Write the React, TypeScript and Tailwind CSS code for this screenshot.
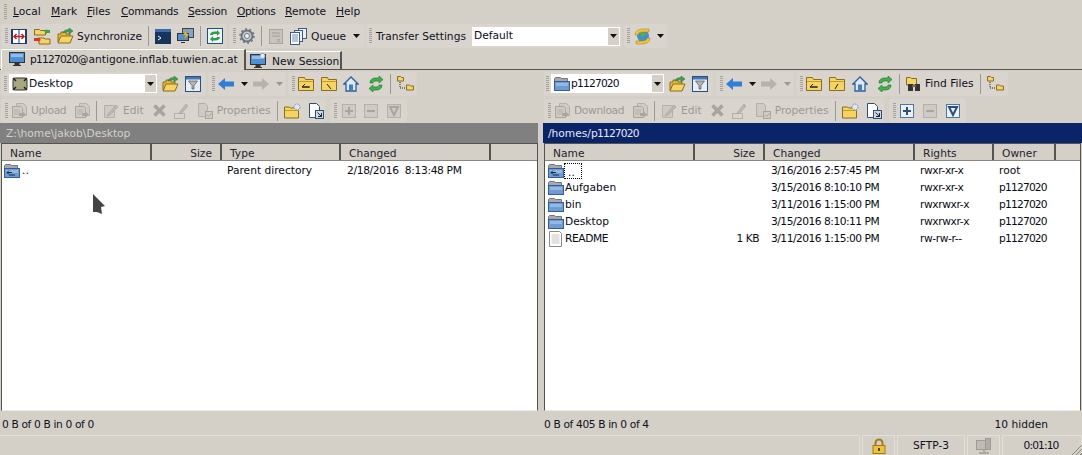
import React from "react";

const font = "font-['DejaVu_Sans',sans-serif]";

function Grip() {
  return (
    <div className="w-[3px] h-[16px] mx-[2px] shrink-0 bg-[repeating-linear-gradient(to_bottom,#a5a19a_0px,#a5a19a_1px,transparent_1px,transparent_2px)]" />
  );
}

function Sep() {
  return <div className="w-px h-[20px] mx-[6px] bg-[#9d9992] shrink-0" />;
}

function Caret({ gray }: { gray?: boolean }) {
  return (
    <svg width="7" height="4" className="shrink-0">
      <path d="M0 0h7L3.5 4z" fill={gray ? "#9b9890" : "#111"} />
    </svg>
  );
}

// the digits in the shot are narrower than DejaVu's, so squeeze them
function Id() {
  return <span className="tracking-[-0.8px]">p1127020</span>;
}

function FolderY({ glyph }: { glyph?: React.ReactNode }) {
  return (
    <svg width="16" height="16" viewBox="0 0 16 16" className="shrink-0">
      <path d="M.5 14.500V1.500h6l1 2h8v11z" fill="#f6d463" stroke="#8a6d1e" />
      <path d="M1 5.500h14" stroke="#c89b24" />
      {glyph}
    </svg>
  );
}

function FolderB({ up }: { up?: boolean }) {
  return (
    <svg width="16" height="16" viewBox="0 0 16 16" className="shrink-0">
      <path d="M.5 14.500V2.500l1-1h5l1 1h6v3" fill="#a8a8a8" stroke="#777" />
      <rect x=".5" y="5.500" width="15" height="9" fill="#6f9bd1" stroke="#2f5f9e" />
      <rect x="2" y="7" width="12" height="3" fill="#94b8e2" />
      {up && <path d="M3 9.500h5M5 7.500l-2 2 2 2M5 12h6" stroke="#0f2c54" fill="none" />}
    </svg>
  );
}

function Arrow({ left, gray }: { left?: boolean; gray?: boolean }) {
  const c = gray ? "#b6b3ac" : "#2f7fd8";
  return (
    <svg width="16" height="12" viewBox="0 0 16 12" className="shrink-0">
      <path d={left ? "M0 6l7-6v3.500h9v5H7V12z" : "M16 6L9 0v3.500H0v5h9V12z"} fill={c} />
    </svg>
  );
}

function FolderOpen() {
  return (
    <svg width="17" height="16" viewBox="0 0 17 16" className="shrink-0">
      <path d="M1 14V6h3V4h5v2h4v8z" fill="#e6b93a" stroke="#8a6d1e" />
      <path d="M1 15l3-7h12l-3 7z" fill="#f6d463" stroke="#8a6d1e" />
      <path d="M6 5c1-3 4-4 6-3V0l4 3-4 3V4c-2-.5-4 0-6 1z" fill="#39a64a" stroke="#1e6b2a" strokeWidth=".5" />
    </svg>
  );
}

function Filter() {
  return (
    <svg width="16" height="16" viewBox="0 0 16 16" className="shrink-0">
      <rect x=".5" y=".5" width="15" height="15" fill="#e8edf3" stroke="#27507f" />
      <rect x="1" y="1" width="14" height="2.500" fill="#3f78b8" />
      <path d="M3.500 5h9L9 9.500V13H7V9.500z" fill="#b5b5b5" stroke="#555" strokeWidth=".7" />
    </svg>
  );
}

function Home() {
  return (
    <svg width="16" height="16" viewBox="0 0 16 16" className="shrink-0">
      <path d="M8 1L1 8h2v7h10V8h2z" fill="#dfe8f2" stroke="#2c5f9b" strokeWidth="1.300" />
      <rect x="6" y="8.500" width="4" height="6.500" fill="#3f7fc4" />
    </svg>
  );
}

function Refresh() {
  return (
    <svg width="16" height="16" viewBox="0 0 16 16" className="shrink-0">
      <path d="M2 7c0-3 2-5 6-5h3V0l4 3.500L11 7V5H8C6 5 5 6 5 7z" fill="#3fb34a" stroke="#1b6e25" strokeWidth=".6" />
      <path d="M14 9c0 3-2 5-6 5H5v2l-4-3.500L5 9v2h3c2 0 3-1 3-2z" fill="#3fb34a" stroke="#1b6e25" strokeWidth=".6" />
    </svg>
  );
}

function Tree() {
  return (
    <svg width="17" height="17" viewBox="0 0 17 17" className="shrink-0">
      <path d="M.5 6V1.500h3l1 1h2V6z" fill="#f6d463" stroke="#8a6d1e" />
      <path d="M9.500 15v-5h3l1 1h3v4z" fill="#f6d463" stroke="#8a6d1e" />
      <path d="M3 7v6h5" stroke="#222" strokeDasharray="1 1" fill="none" />
    </svg>
  );
}

function DocStack() {
  return (
    <svg width="16" height="16" viewBox="0 0 16 16" className="shrink-0">
      <path d="M5.500.5h7l3 3v9h-10z" fill="#cfcbc4" stroke="#b4b1aa" />
      <path d="M1.500 3.500h8l2 2v9h-10z" fill="#cfcbc4" stroke="#a9a59e" />
      <path d="M3 7h6M3 9h6M3 11h6" stroke="#b4b1aa" />
      <path d="M8 10h3V8l4 3.500-4 3.500v-2H8z" fill="#aaa69f" />
    </svg>
  );
}

function FileDoc() {
  return (
    <svg width="16" height="16" viewBox="0 0 16 16" className="shrink-0">
      <path d="M1.500.5h10l2 2v13h-12z" fill="#fff" stroke="#8a8a8a" />
      <path d="M3.500 4h8M3.500 6h8M3.500 8h8M3.500 10h8M3.500 12h8" stroke="#c4c4c4" />
    </svg>
  );
}

function Pencil() {
  return (
    <svg width="16" height="16" viewBox="0 0 16 16" className="shrink-0">
      <path d="M1.500 2.500h10v12h-10z" fill="#cfcbc4" stroke="#b4b1aa" />
      <path d="M5 11l8-9 2 2-8 8-3 1z" fill="#bdb9b2" stroke="#aaa69f" strokeWidth=".7" />
    </svg>
  );
}

function Cross() {
  return (
    <svg width="15" height="15" viewBox="0 0 15 15" className="shrink-0">
      <path d="M2.500 2.500l10 10M12.500 2.500l-10 10" stroke="#a9a59e" strokeWidth="3.600" />
    </svg>
  );
}

function Rename() {
  return (
    <svg width="16" height="16" viewBox="0 0 16 16" className="shrink-0">
      <rect x=".5" y="10.500" width="10" height="5" fill="none" stroke="#b4b1aa" />
      <path d="M5 10l7-9 2 2-7 8z" fill="#bdb9b2" stroke="#aaa69f" strokeWidth=".7" />
    </svg>
  );
}

function Props() {
  return (
    <svg width="16" height="16" viewBox="0 0 16 16" className="shrink-0">
      <path d="M1.500.5h7l2 2v11h-9z" fill="#cfcbc4" stroke="#b4b1aa" />
      <rect x="8.500" y="8.500" width="7" height="7" fill="#cfcbc4" stroke="#a9a59e" />
      <path d="M10 12l1.500 1.500 3-3" stroke="#a9a59e" fill="none" />
    </svg>
  );
}

function NewFolder() {
  return (
    <svg width="17" height="16" viewBox="0 0 17 16" className="shrink-0">
      <path d="M.5 15V4h5l1 1h8v10z" fill="#f6d463" stroke="#8a6d1e" />
      <path d="M1 7.500h14" stroke="#c89b24" />
      <circle cx="13" cy="4" r="3" fill="#dfe6ee" stroke="#6b8db5" strokeDasharray="1.500 .8" />
    </svg>
  );
}

function ShortCut() {
  return (
    <svg width="16" height="16" viewBox="0 0 16 16" className="shrink-0">
      <path d="M1.500.5h7l3 3v11h-10z" fill="#fff" stroke="#2c5079" />
      <rect x="7.500" y="7.500" width="8" height="8" fill="#cfd8e2" stroke="#2c5079" />
      <path d="M9.500 9.500l4 4M13.500 10v3.500H10" stroke="#10243c" fill="none" />
    </svg>
  );
}

function BoxSign({ kind, gray }: { kind: "+" | "-" | "v"; gray?: boolean }) {
  const c = gray ? "#aaa69f" : "#27507f";
  return (
    <svg width="14" height="14" viewBox="0 0 14 14" className="shrink-0">
      <rect x=".5" y=".5" width="13" height="13" fill={gray ? "#cfcbc4" : "#eef1f4"} stroke={gray ? "#b4b1aa" : "#4a78ab"} />
      {kind === "+" && <path d="M3 7h8M7 3v8" stroke={c} strokeWidth="2" />}
      {kind === "-" && <path d="M3 7h8" stroke={c} strokeWidth="2" />}
      {kind === "v" && <path d="M3 3h8L7 11z" fill="none" stroke={c} strokeWidth="2" />}
    </svg>
  );
}

function Monitor({ star }: { star?: boolean }) {
  return (
    <svg width="16" height="16" viewBox="0 0 16 16" className="shrink-0">
      <rect x=".5" y="1.500" width="15" height="10" fill="#4f8fd6" stroke="#333" />
      <rect x="2" y="3" width="12" height="3" fill="#8fbdf0" />
      <path d="M6 12h4v2H6zM4 14.500h8" fill="#333" stroke="#333" />
      {star && <circle cx="12.500" cy="3" r="2.500" fill="#e6ebf1" stroke="#6b8db5" strokeDasharray="1.200 .7" />}
    </svg>
  );
}

function Group({ className, children }: { className: string; children: React.ReactNode }) {
  return <div className={`flex items-center rounded-[3px] bg-[#d9d5ce] shrink-0 ${className}`}>{children}</div>;
}

function Combo({ w, icon, label }: { w: string; icon: React.ReactNode; label: React.ReactNode }) {
  return (
    <div className={`flex items-center h-[19px] bg-white shrink-0 ${w}`}>
      <div className="ml-[2px] w-[17px] flex justify-center shrink-0">{icon}</div>
      <span className="ml-[1px] text-[#0b0b1e] flex-1">{label}</span>
      <div className="w-[11px] h-[17px] mr-px bg-[#d4d0c8] flex items-center justify-center">
        <Caret />
      </div>
    </div>
  );
}

function DriveIcon() {
  return (
    <svg width="16" height="16" viewBox="0 0 16 16">
      <rect x="1" y="2" width="14" height="12" rx="2" fill="#a9a77c" stroke="#333" />
      <path d="M1 2l3 3M15 2l-3 3M1 14l3-3M15 14l-3-3" stroke="#222" strokeWidth="1.500" />
    </svg>
  );
}

function Head({ w, right, children }: { w: string; right?: boolean; children?: React.ReactNode }) {
  return (
    <div
      className={`h-full shrink-0 flex items-center border-r-2 border-[#55534f] pt-[2px] ${w} ${right ? "justify-end pr-[8px]" : "pl-[8px]"}`}
    >
      {children}
    </div>
  );
}

function Row({ children }: { children: React.ReactNode }) {
  return <div className="flex items-center h-[17px] text-[#0a0a14]">{children}</div>;
}

function Cell({ w, right, children, tight }: { w: string; right?: boolean; children?: React.ReactNode; tight?: string }) {
  return <div className={`shrink-0 whitespace-nowrap ${w} ${tight ?? ""} ${right ? "text-right" : ""}`}>{children}</div>;
}

function NavGroups({ className }: { className: string }) {
  return (
    <Group className={`w-[78px] h-[24px] pl-[2px] ${className}`}>
      <Grip />
      <div className="ml-[1px]"><Arrow left /></div>
      <div className="ml-[7px]"><Caret /></div>
      <div className="ml-[5px]"><Arrow gray /></div>
      <div className="ml-[7px]"><Caret gray /></div>
    </Group>
  );
}

function FileButtons({ label, w }: { label: string; w: string }) {
  return (
    <>
      <Grip />
      <div className="ml-[1px]"><DocStack /></div>
      <span className={`ml-[4px] tracking-[-0.35px] ${w}`}>{label}</span>
      <div className="ml-[8px]"><DocStack /></div>
      <Sep />
      <Pencil />
      <span className="ml-[4px]">Edit</span>
      <div className="ml-[8px]"><Cross /></div>
      <div className="ml-[7px]"><Rename /></div>
      <div className="ml-[7px]"><Props /></div>
      <span className="ml-[4px]">Properties</span>
      <Sep />
      <NewFolder />
      <div className="ml-[7px]"><ShortCut /></div>
    </>
  );
}

const rightRows = [
  ["Aufgaben", "", "3/15/2016 8:10:10 PM", "rwxr-xr-x", "p1127020"],
  ["bin", "", "3/11/2016 1:15:00 PM", "rwxrwxr-x", "p1127020"],
  ["Desktop", "", "3/15/2016 8:10:11 PM", "rwxrwxr-x", "p1127020"],
  ["README", "1 KB", "3/11/2016 1:15:00 PM", "rw-rw-r--", "p1127020"],
];

export default function App() {
  return (
    <div className={`w-[1082px] h-[455px] overflow-hidden bg-[#d4d0c8] text-[10.67px] leading-[13px] text-[#101024] flex flex-col whitespace-nowrap ${font}`}>
      {/* menu */}
      <div className="h-[24px] flex items-center shrink-0 pl-[2px]">
        <Grip />
        <div className="flex ml-[4px] pb-[1px]">
          <span className="w-[38px]"><u>L</u>ocal</span>
          <span className="w-[36px]"><u>M</u>ark</span>
          <span className="w-[34px]"><u>F</u>iles</span>
          <span className="w-[67px] tracking-[-0.4px]"><u>C</u>ommands</span>
          <span className="w-[49px] tracking-[-0.25px]"><u>S</u>ession</span>
          <span className="w-[48px] tracking-[-0.4px]"><u>O</u>ptions</span>
          <span className="w-[51px]"><u>R</u>emote</span>
          <span><u>H</u>elp</span>
        </div>
      </div>

      {/* main toolbar */}
      <div className="h-[24px] flex items-center shrink-0 pl-[1px]">
        <Group className="w-[226px] h-[24px] pl-[2px]">
          <Grip />
          <svg width="16" height="15" viewBox="0 0 16 15" className="ml-[1px] shrink-0">
            <rect x=".5" y=".5" width="15" height="14" fill="#fff" stroke="#1f3f73" />
            <path d="M1.500 1v13M14.500 1v13M8 1v13" stroke="#1f3f73" />
            <path d="M3 7.500h10M5.500 5L3 7.500 5.500 10M10.500 5L13 7.500 10.500 10" stroke="#c41f1f" strokeWidth="1.500" fill="none" />
          </svg>
          <div className="ml-[7px] w-[16px] shrink-0">
            <svg width="17" height="17" viewBox="0 0 17 17">
              <path d="M.5 7V1.500h5l1 1h5V7zM5 16v-6h5l1 1h5v5z" fill="#f6d463" stroke="#8a6d1e" />
              <path d="M10 3l3-2v1h3v3h-3v1z" fill="#39a64a" />
              <path d="M7 12l-3 2v-1H0v-3h4V9z" fill="#d33" />
            </svg>
          </div>
          <div className="ml-[7px] shrink-0"><FolderOpen /></div>
          <span className="ml-[3px]">Synchronize</span>
          <Sep />
          <svg width="16" height="15" viewBox="0 0 16 15" className="shrink-0">
            <rect width="16" height="15" fill="#16345c" />
            <rect width="16" height="3" fill="#3c6ea6" />
            <path d="M3 7l3 2-3 2" stroke="#fff" fill="none" />
          </svg>
          <svg width="17" height="16" viewBox="0 0 17 16" className="ml-[6px] shrink-0">
            <rect x="5.500" y=".5" width="11" height="9" fill="#7ba5d6" stroke="#444" />
            <rect x=".5" y="5.500" width="11" height="7" fill="#4f8fd6" stroke="#333" />
            <path d="M4 14.500h4" stroke="#333" />
            <path d="M10 1L6 7h2.500L7 12l5-6H9.500z" fill="#f2c62b" stroke="#a67c10" strokeWidth=".5" />
          </svg>
          <Sep />
          <svg width="16" height="16" viewBox="0 0 16 16" className="shrink-0">
            <rect x=".5" y=".5" width="15" height="15" fill="#eef2f6" stroke="#1f4f86" />
            <path d="M3 7c0-2 2-3.500 5-3.500h2V2l3 3-3 3V6H8C6.500 6 6 6.500 6 7zM13 9c0 2-2 3.500-5 3.500H6V14l-3-3 3-3v2h2c1.500 0 2-.5 2-1z" fill="#2f9e44" />
          </svg>
        </Group>
        <Group className="w-[136px] h-[24px] ml-[2px] pl-[2px]">
          <Grip />
          <svg width="16" height="16" viewBox="0 0 16 16" className="ml-[1px] shrink-0">
            <circle cx="8" cy="8" r="5.500" fill="#c6cbd2" stroke="#6a7480" strokeWidth="2" />
            <circle cx="8" cy="8" r="7" fill="none" stroke="#6a7480" strokeWidth="1.500" strokeDasharray="2 2.400" />
            <circle cx="8" cy="8" r="2.500" fill="#eef1f4" stroke="#6a7480" />
          </svg>
          <Sep />
          <svg width="14" height="16" viewBox="0 0 14 16" className="ml-[1px] shrink-0">
            <rect x=".5" y="1.500" width="13" height="14" fill="#c9c5be" stroke="#a9a59e" />
            <path d="M3 5h8M3 8h8M8 11l3 3M11 11l-3 3" stroke="#a09c95" />
          </svg>
          <svg width="17" height="17" viewBox="0 0 17 17" className="ml-[7px] shrink-0">
            <rect x="8.500" y=".5" width="8" height="10" fill="#eaf0f6" stroke="#3b5d85" />
            <rect x="4.500" y="2.500" width="8" height="11" fill="#eaf0f6" stroke="#3b5d85" />
            <rect x=".5" y="4.500" width="9" height="12" fill="#fff" stroke="#3b5d85" />
            <path d="M2 7h6M2 9h6M2 11h6M2 13h6" stroke="#6a8bb0" />
          </svg>
          <span className="ml-[4px]">Queue</span>
          <div className="ml-[7px]"><Caret /></div>
        </Group>
        <Group className="w-[256px] h-[24px] ml-[1px] pl-[1px]">
          <Grip />
          <span className="ml-[2px] mt-[1px] w-[96px]">Transfer Settings</span>
          <div className="flex items-center w-[148px] h-[19px] bg-white pl-[2px]">
            <span className="flex-1 pb-[1px] text-[#0b0b1e]">Default</span>
            <div className="w-[11px] h-[17px] mr-px bg-[#d4d0c8] flex items-center justify-center"><Caret /></div>
          </div>
        </Group>
        <Group className="w-[43px] h-[24px] ml-[2px] pl-[1px]">
          <Grip />
          <svg width="17" height="17" viewBox="0 0 17 17" className="ml-[2px] shrink-0">
            <circle cx="9" cy="8" r="6" fill="#3f8ed8" />
            <path d="M7 3l4 1 1 3-3 2-3-1zM9 11l2 1-2 2z" fill="#4fae54" />
            <path d="M1 7c0-4 4-6 8-6h6v3H9C6 4 4 5 4 7zM16 10c0 4-4 6-8 6H2v-3h6c3 0 5-1 5-3z" fill="#f0c43c" stroke="#a67c10" strokeWidth=".5" />
          </svg>
          <div className="ml-[6px]"><Caret /></div>
        </Group>
      </div>

      {/* tabs */}
      <div className="h-[22px] shrink-0 flex items-end pl-[1px] border-b border-[#55534f]">
        <div className="h-[21px] w-[245px] mb-[-1px] relative z-10 flex items-center gap-[5px] pl-[7px] pb-[2px] bg-[#d4d0c8] border-t border-l border-white border-r-2 border-r-[#55534f] rounded-tl-[2px]">
          <Monitor />
          <span><Id />@antigone.inflab.tuwien.ac.at</span>
        </div>
        <div className="h-[18px] w-[96px] flex items-center gap-[6px] pl-[4px] pt-[1px] bg-[#d4d0c8] border-t border-white border-r-2 border-r-[#55534f]">
          <Monitor star />
          <span>New Session</span>
        </div>
      </div>

      {/* panels */}
      <div className="flex-1 min-h-0 flex pt-px">
        {/* left */}
        <div className="w-[538px] shrink-0 flex flex-col">
          <div className="h-[25px] flex items-center shrink-0 pl-px">
            <Group className="w-[205px] h-[24px] pl-[1px]">
              <Grip />
              <Combo w="w-[148px]" icon={<DriveIcon />} label="Desktop" />
              <div className="ml-[5px]"><FolderOpen /></div>
              <div className="ml-[6px]"><Filter /></div>
            </Group>
            <NavGroups className="ml-[2px]" />
            <Group className="w-[129px] h-[24px] ml-[2px] pl-[2px]">
              <Grip />
              <div className="ml-[1px]"><FolderY glyph={<path d="M4 11h7M7 8l-3 3h8" stroke="#222" fill="none" />} /></div>
              <div className="ml-[7px]"><FolderY glyph={<path d="M6 8l4 5" stroke="#222" />} /></div>
              <div className="ml-[6px]"><Home /></div>
              <div className="ml-[9px]"><Refresh /></div>
              <Sep />
              <Tree />
            </Group>
          </div>
          <div className="h-[27px] flex items-center shrink-0 pl-px pt-[2px] text-[#9c9992]">
            <Group className="w-[324px] h-[24px] pl-[2px]">
              <FileButtons label="Upload" w="w-[35px]" />
            </Group>
            <Group className="w-[77px] h-[24px] ml-[5px] pl-[2px]">
              <Grip />
              <div className="ml-[3px]"><BoxSign kind="+" gray /></div>
              <div className="ml-[8px]"><BoxSign kind="-" gray /></div>
              <div className="ml-[9px]"><BoxSign kind="v" gray /></div>
            </Group>
          </div>
          <div className="h-[20px] shrink-0 bg-[#808080] text-[#d4d0c8] flex items-center pl-[6px]">Z:\home\jakob\Desktop</div>
          <div className="flex-1 min-h-0 ml-px border border-[#55534f] border-b-[#ecebe7] bg-white flex flex-col relative">
            <div className="h-[17px] mb-px shrink-0 bg-[#d4d0c8] flex text-[#232330] border-b border-[#8a8780]">
              <Head w="w-[150px]">Name</Head>
              <Head w="w-[70px]" right>Size</Head>
              <Head w="w-[119px]">Type</Head>
              <Head w="w-[150px]">Changed</Head>
            </div>
            <Row>
              <div className="pl-[2px]"><FolderB up /></div>
              <Cell w="w-[207px]"><span className="ml-[2px]">..</span></Cell>
              <Cell w="w-[120px]">Parent directory</Cell>
              <Cell w="w-[150px]" tight="tracking-[-0.33px]">2/18/2016&nbsp; 8:13:48 PM</Cell>
            </Row>
            {/* mouse cursor caught in the shot */}
            <svg width="13" height="21" viewBox="0 0 13 21" className="absolute left-[91px] top-[50px]">
              <path d="M0 0l12 12-4 1 1 7-5-2-4 0z" fill="#444" />
            </svg>
          </div>
          <div className="h-[22px] shrink-0 flex items-center pl-[2px] pt-[4px] tracking-[-0.36px]">0 B of 0 B in 0 of 0</div>
        </div>

        {/* right */}
        <div className="ml-[5px] flex-1 flex flex-col min-w-0">
          <div className="h-[25px] flex items-center shrink-0 pl-px">
            <Group className="w-[169px] h-[24px] pl-[0px]">
              <Grip />
              <Combo w="w-[113px]" icon={<FolderB />} label={<Id />} />
              <div className="ml-[5px]"><FolderOpen /></div>
              <div className="ml-[6px]"><Filter /></div>
            </Group>
            <NavGroups className="ml-[3px]" />
            <Group className="w-[212px] h-[24px] ml-[2px] pl-[2px]">
              <Grip />
              <div className="ml-[1px]"><FolderY glyph={<path d="M4 11h7M7 8l-3 3h8" stroke="#222" fill="none" />} /></div>
              <div className="ml-[7px]"><FolderY glyph={<path d="M6 13l3-5" stroke="#222" />} /></div>
              <div className="ml-[7px]"><Home /></div>
              <div className="ml-[9px]"><Refresh /></div>
              <Sep />
              <svg width="17" height="16" viewBox="0 0 17 16" className="shrink-0">
                <path d="M.5 9V1.500h4l1 1h5V9z" fill="#f6d463" stroke="#8a6d1e" />
                <rect x="2" y="8" width="5" height="7" fill="#333" />
                <rect x="9" y="8" width="5" height="7" fill="#333" />
                <rect x="6" y="9" width="4" height="2" fill="#666" />
              </svg>
              <span className="ml-[2px]">Find Files</span>
              <Sep />
              <Tree />
            </Group>
          </div>
          <div className="h-[27px] flex items-center shrink-0 pl-px pt-[2px] text-[#9c9992]">
            <Group className="w-[340px] h-[24px] pl-[2px]">
              <FileButtons label="Download" w="w-[50px]" />
            </Group>
            <Group className="w-[77px] h-[24px] ml-[5px] pl-[2px]">
              <Grip />
              <div className="ml-[2px]"><BoxSign kind="+" /></div>
              <div className="ml-[9px]"><BoxSign kind="-" gray /></div>
              <div className="ml-[9px]"><BoxSign kind="v" /></div>
            </Group>
          </div>
          <div className="h-[20px] shrink-0 bg-[#0a246a] text-[#e8e8f0] flex items-center pl-[5px]">/homes/<Id /></div>
          <div className="flex-1 min-h-0 ml-[1px] mr-[1px] border border-[#55534f] border-b-[#ecebe7] bg-white flex flex-col">
            <div className="h-[17px] mb-px shrink-0 bg-[#d4d0c8] flex text-[#232330] border-b border-[#8a8780]">
              <Head w="w-[150px]">Name</Head>
              <Head w="w-[70px]" right>Size</Head>
              <Head w="w-[150px]">Changed</Head>
              <Head w="w-[79px]">Rights</Head>
              <Head w="w-[62px]">Owner</Head>
            </div>
            <Row>
              <div className="pl-[3px]"><FolderB up /></div>
              <Cell w="w-[207px]">
                <span className="inline-block w-[18px] h-[16px] border border-dotted border-black align-middle leading-[18px] pl-[3px]">..</span>
              </Cell>
              <Cell w="w-[149px]" tight="tracking-[-0.5px]">3/16/2016 2:57:45 PM</Cell>
              <Cell w="w-[79px]" tight="tracking-[-0.4px]">rwxr-xr-x</Cell>
              <Cell w="w-[60px]">root</Cell>
            </Row>
            {rightRows.map((r) => (
              <Row key={r[0]}>
                <div className="pl-[3px]">{r[0] === "README" ? <FileDoc /> : <FolderB />}</div>
                <Cell w="w-[116px]" tight={r[0] === "README" ? "tracking-[-0.4px]" : ""}><span className="ml-[1px]">{r[0]}</span></Cell>
                <Cell w="w-[79px]" right tight="tracking-[-0.5px]">{r[1]}</Cell>
                <Cell w="w-[12px]" />
                <Cell w="w-[149px]" tight="tracking-[-0.5px]">{r[2]}</Cell>
                <Cell w="w-[79px]" tight="tracking-[-0.4px]">{r[3]}</Cell>
                <Cell w="w-[60px]"><Id /></Cell>
              </Row>
            ))}
          </div>
          <div className="h-[22px] shrink-0 flex items-center justify-between pl-px pr-[34px] pt-[4px]">
            <span className="tracking-[-0.36px]">0 B of 405 B in 0 of 4</span>
            <span>10 hidden</span>
          </div>
        </div>
      </div>

      {/* status bar */}
      <div className="h-[22px] shrink-0 flex pt-[2px] gap-[2px] relative">
        <div className="flex-1 h-[20px] border-t border-r border-[#e2dfd9]" />
        <div className="w-[33px] h-[20px] border border-[#e2dfd9] border-b-0 flex items-center justify-center">
          <svg width="14" height="16" viewBox="0 0 14 16">
            <path d="M3.500 8V5a3.500 3.500 0 017 0v3" fill="none" stroke="#a57a16" strokeWidth="2" />
            <rect x="1" y="7.500" width="12" height="8" fill="#f0c23c" stroke="#a57a16" />
            <rect x="6" y="10" width="2" height="3" fill="#5a4208" />
          </svg>
        </div>
        <div className="w-[68px] h-[20px] border border-[#e2dfd9] border-b-0 flex items-center justify-center">SFTP-3</div>
        <div className="w-[33px] h-[20px] border border-[#e2dfd9] border-b-0 flex items-center justify-center">
          <svg width="16" height="16" viewBox="0 0 16 16">
            <rect x=".5" y="2.500" width="10" height="9" fill="#c0bcb5" stroke="#a09c95" />
            <rect x="9.500" y=".5" width="5" height="11" fill="#b0aca5" stroke="#a09c95" />
            <path d="M8 12v2M3 15h10" stroke="#a09c95" strokeWidth="1.500" />
          </svg>
        </div>
        <div className="w-[80px] h-[20px] border border-[#e2dfd9] border-b-0 flex items-center justify-center pr-[2px] tracking-[-0.9px]">0:01:10</div>
        <div className="absolute right-0 bottom-0 w-[11px] h-[11px] bg-[repeating-linear-gradient(135deg,transparent_0px,transparent_2px,#8d8a83_2px,#8d8a83_3px)] [clip-path:polygon(100%_0,100%_100%,0_100%)]" />
      </div>
    </div>
  );
}
